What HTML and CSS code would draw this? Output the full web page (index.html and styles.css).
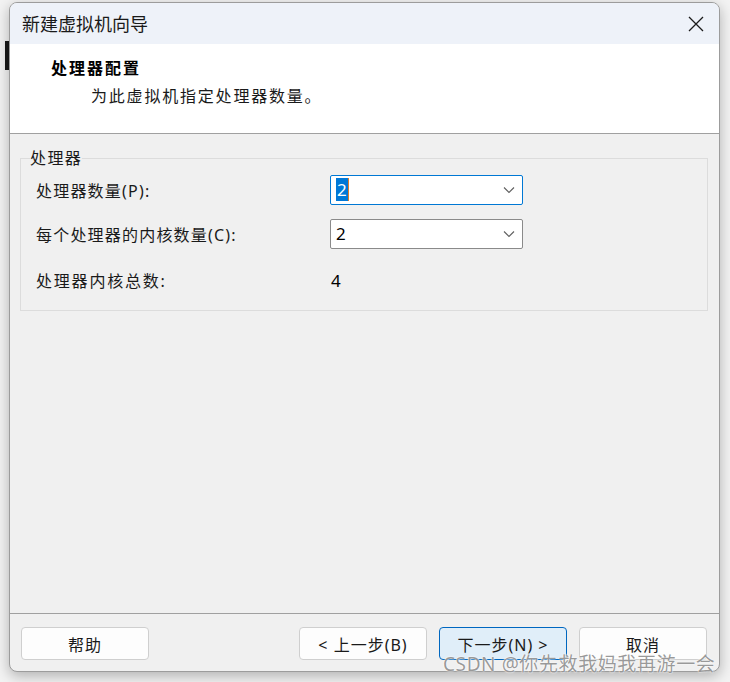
FILE: index.html
```html
<!DOCTYPE html>
<html lang="zh-CN">
<head>
  <meta charset="UTF-8" />
  <title>新建虚拟机向导</title>
  <link rel="stylesheet" href="styles.css">
</head>
<body>
  <div class="behind"></div>

  <div class="janela">
    <div class="titulo">
      <span class="titulo-texto">新建虚拟机向导</span>
      <svg class="fechar" width="16" height="16" viewBox="0 0 16 16">
        <path d="M1 1 L15 15 M15 1 L1 15" stroke="#1b1b1b" stroke-width="1.3" fill="none" />
      </svg>
    </div>

    <header class="cabecalho">
      <h1>处理器配置</h1>
      <p>为此虚拟机指定处理器数量。</p>
    </header>

    <main class="conteudo">
      <fieldset class="grupo">
        <legend>处理器</legend>

        <div class="linha">
          <label for="proc">处理器数量(P):</label>
          <div class="combo focado" id="proc">
            <span class="valor"><span class="selecao">2</span></span>
            <svg class="seta" width="12" height="8" viewBox="0 0 12 8">
              <path d="M1 1.5 L6 6.5 L11 1.5" stroke="#606060" stroke-width="1.1" fill="none" />
            </svg>
          </div>
        </div>

        <div class="linha">
          <label for="nucleos">每个处理器的内核数量(C):</label>
          <div class="combo" id="nucleos">
            <span class="valor">2</span>
            <svg class="seta" width="12" height="8" viewBox="0 0 12 8">
              <path d="M1 1.5 L6 6.5 L11 1.5" stroke="#606060" stroke-width="1.1" fill="none" />
            </svg>
          </div>
        </div>

        <div class="linha total">
          <label>处理器内核总数:</label>
          <span class="numero">4</span>
        </div>
      </fieldset>
    </main>

    <footer class="rodape">
      <button class="botao">帮助</button>
      <div class="acoes">
        <button class="botao">&lt; 上一步(B)</button>
        <button class="botao primario">下一步(N) &gt;</button>
        <button class="botao">取消</button>
      </div>
    </footer>
  </div>

  <div class="marca">CSDN @你先救我妈我再游一会</div>
</body>
</html>
```

FILE: styles.css
```css
body {
  font-family: "Noto Sans", "Noto Sans CJK SC", sans-serif;
  background-color: #f3f3f3;
  color: #000;
  margin: 0;
  padding: 2px 0 0 9px;
  width: 730px;
  height: 682px;
  box-sizing: border-box;
  overflow: hidden;
  position: relative;
}

.behind {
  position: absolute;
  left: 5px;
  top: 41px;
  width: 4px;
  height: 29px;
  background-color: #1a1a1a;
}

.janela {
  position: relative;
  width: 711px;
  height: 670px;
  box-sizing: border-box;
  border: 1px solid #9c9c9c;
  border-radius: 8px;
  overflow: hidden;
  background-color: #f0f0f0;
  display: flex;
  flex-direction: column;
  box-shadow: 0 4px 14px rgba(0, 0, 0, 0.28);
}

.titulo {
  height: 41px;
  background-color: #eef2f9;
  display: flex;
  align-items: center;
  justify-content: space-between;
  padding: 0 15px 0 12px;
}

.titulo-texto {
  font-size: 18px;
  color: #1a1a1a;
  line-height: 20px;
}

.fechar {
  display: block;
}

.cabecalho {
  height: 89px;
  background-color: #fff;
  border-bottom: 1px solid #a0a0a0;
}

.cabecalho h1 {
  margin: 0;
  padding: 14px 0 0 41px;
  font-size: 16px;
  font-weight: bold;
  letter-spacing: 2px;
  line-height: 20px;
}

.cabecalho p {
  margin: 8px 0 0 81px;
  font-size: 16px;
  letter-spacing: 1.8px;
  line-height: 20px;
  color: #1a1a1a;
}

.conteudo {
  flex: 1;
  padding: 14px 11px 0 10px;
}

.grupo {
  margin: 0;
  border: 1px solid #dcdcdc;
  padding: 7px 15px 15px 15px;
}

.grupo legend {
  padding: 0;
  margin-left: -6px;
  font-size: 16px;
  letter-spacing: 1.4px;
  line-height: 20px;
  color: #1a1a1a;
}

.linha {
  display: flex;
  align-items: center;
  height: 30px;
  margin-bottom: 14px;
}

.linha label {
  width: 294px;
  font-size: 16px;
  letter-spacing: 1.2px;
  color: #1a1a1a;
}

.linha.total label {
  letter-spacing: 1.8px;
}

.linha.total {
  margin: 16px 0 0 0;
}

.numero {
  font-size: 17px;
  margin-left: 1px;
}

.combo {
  width: 193px;
  height: 30px;
  box-sizing: border-box;
  border: 1px solid #8a8a8a;
  border-radius: 2px;
  background-color: #fff;
  display: flex;
  align-items: center;
  justify-content: space-between;
  padding: 0 7px 0 5px;
}

.combo.focado {
  border-color: #0078d4;
  border-width: 1.5px;
}

.valor {
  font-size: 17px;
  line-height: 22px;
}

.selecao {
  background-color: #0078d7;
  color: #fff;
  padding: 0 1px;
  border-right: 1px solid #e07b2a;
}

.rodape {
  border-top: 1px solid #a0a0a0;
  padding: 13px 12px 11px 11px;
  display: flex;
  justify-content: space-between;
}

.acoes {
  display: flex;
  gap: 12px;
}

.botao {
  width: 128px;
  height: 33px;
  background-color: #fdfdfd;
  border: 1px solid #cfcfcf;
  border-radius: 4px;
  font-family: inherit;
  font-size: 16px;
  letter-spacing: 1px;
  color: #1a1a1a;
  padding: 0;
  cursor: pointer;
}

.botao.primario {
  background-color: #e0eef9;
  border-color: #0067c0;
}

.marca {
  position: absolute;
  left: 443px;
  top: 649px;
  font-size: 19px;
  letter-spacing: 0.6px;
  color: rgba(120, 120, 120, 0.75);
  text-shadow: 0 0 2px #fff, 0 0 1px #fff;
  white-space: nowrap;
}
```
